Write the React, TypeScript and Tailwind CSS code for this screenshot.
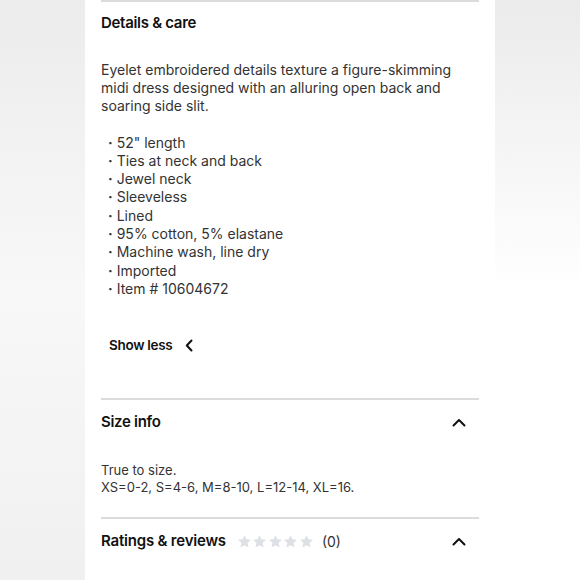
import React from "react";

const bullets = [
  '52" length',
  "Ties at neck and back",
  "Jewel neck",
  "Sleeveless",
  "Lined",
  "95% cotton, 5% elastane",
  "Machine wash, line dry",
  "Imported",
  "Item # 10604672",
];

function ChevronUp() {
  return (
    <svg width="14" height="9" viewBox="0 0 14 9" fill="none">
      <path d="M1.5 7.5 L7 2 L12.5 7.5" stroke="#111" strokeWidth="2" strokeLinecap="round" strokeLinejoin="round" />
    </svg>
  );
}

function Star() {
  return (
    <svg width="15" height="15" viewBox="0 0 24 24">
      <path d="M12 1.8l3.1 6.6 7.2.9-5.3 5 1.4 7.1L12 17.9l-6.4 3.5L7 14.3l-5.3-5 7.2-.9z" fill="#dde1e6" />
    </svg>
  );
}

export default function App() {
  return (
    <div
      className="flex h-[580px] w-[580px] overflow-hidden bg-white"
      style={{ fontFamily: "Inter, 'Liberation Sans', sans-serif" }}
    >
      <div className="w-[85px] shrink-0 bg-gradient-to-b from-[#ececec] via-[#f8f8f8] to-[#f0f0f0]" />

      <div className="w-[410px] shrink-0 bg-white px-4">
        <div className="border-t-2 border-[#dcdcdc] pt-[10px]">
          <h2 className="text-[15px] font-semibold tracking-[-0.3px] text-[#111]">Details &amp; care</h2>

          <p className="mt-[26px] text-[14px] leading-[18px] text-[#333]">
            Eyelet embroidered details texture a figure-skimming midi dress designed with an alluring open back and
            soaring side slit.
          </p>

          <ul className="mt-[19px] pl-[7px] text-[14px] leading-[18.3px] text-[#333]">
            {bullets.map((b) => (
              <li key={b} className="flex gap-[4px]">
                <span className="font-bold">·</span>
                <span>{b}</span>
              </li>
            ))}
          </ul>

          <button className="mt-[37px] ml-[8px] flex items-center gap-[13px] text-[13.5px] font-semibold tracking-[-0.3px] text-[#111]">
            Show less
            <svg width="8" height="13" viewBox="0 0 8 13" fill="none">
              <path d="M6.5 1.5 L1.8 6.5 L6.5 11.5" stroke="#111" strokeWidth="2" strokeLinecap="round" strokeLinejoin="round" />
            </svg>
          </button>
        </div>

        <div className="mt-[43px] border-t-2 border-[#dcdcdc]">
          <div className="flex h-[44px] items-center justify-between pr-[13px]">
            <h2 className="text-[15px] font-semibold tracking-[-0.3px] text-[#111]">Size info</h2>
            <ChevronUp />
          </div>
          <div className="mt-[18px] text-[13px] leading-[17px] text-[#333]">
            <p>True to size.</p>
            <p>XS=0-2, S=4-6, M=8-10, L=12-14, XL=16.</p>
          </div>
        </div>

        <div className="mt-[21px] border-t-2 border-[#dcdcdc]">
          <div className="flex h-[44px] items-center justify-between pr-[13px]">
            <div className="flex items-center">
              <h2 className="text-[15px] font-semibold tracking-[-0.2px] text-[#111]">Ratings &amp; reviews</h2>
              <div className="ml-[11px] flex gap-[0.5px]">
                <Star />
                <Star />
                <Star />
                <Star />
                <Star />
              </div>
              <span className="ml-[8px] text-[14px] text-[#333]">(0)</span>
            </div>
            <ChevronUp />
          </div>
        </div>
      </div>

      <div className="flex-1 bg-gradient-to-b from-[#ebebeb] via-white to-white" />
    </div>
  );
}
